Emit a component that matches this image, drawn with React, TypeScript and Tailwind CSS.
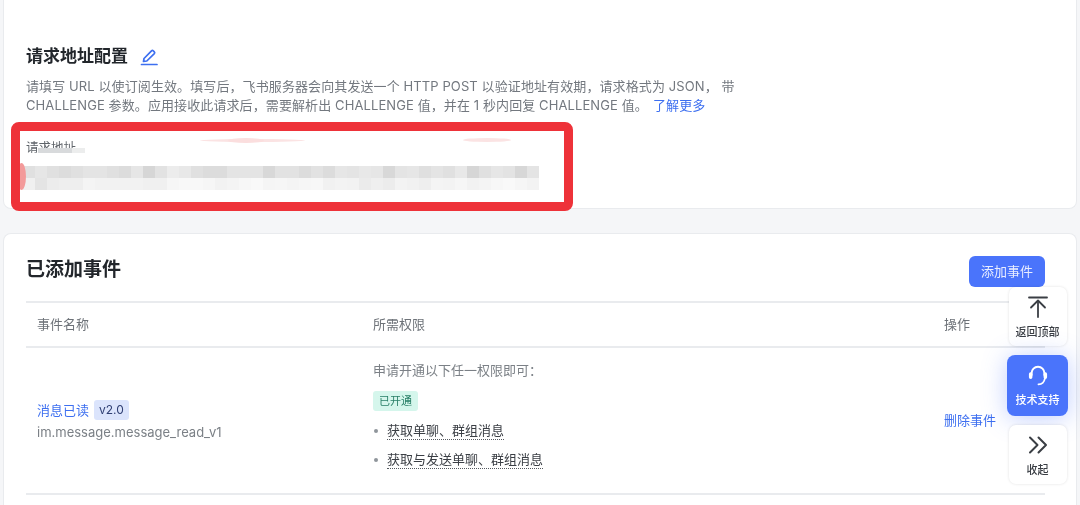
const FONT = "font-['Inter','Noto_Sans_CJK_SC',sans-serif]";

// pixelated address, one shade per mosaic block
const ROW_A = [
  "e0", "e6", "e0", "dc", "e0", "e4", "e4", "e0", "dc", "e6", "d6", "e2", "ec", "e8", "e0", "dc",
  "dc", "e4", "e4", "e4", "d8", "e2", "e2", "dc", "e2", "dc", "e6", "e4", "e8", "e6", "d8", "e4",
  "e6", "df", "e4", "e0", "e8", "d6", "e0", "e6", "e3", "d7", "e4",
];
const ROW_B = [
  "f0", "e4", "ec", "ee", "ee", "f4", "f2", "f2", "f2", "f2", "f0", "f0", "f6", "f8", "f8", "f6",
  "f2", "f4", "f7", "f9", "f5", "f6", "f4", "f6", "f7", "f1", "f3", "f2", "eb", "ef", "ec", "f3",
  "f1", "ee", "f4", "f3", "f6", "f2", "f4", "f7", "f9", "f6", "f3",
];

function PencilIcon() {
  return (
    <svg width="18" height="18" viewBox="0 0 18 18" fill="none" stroke="#3d6ff0" strokeWidth="1.7">
      <path d="M4 10.500 11.500 2.800a1.300 1.300 0 0 1 1.800 0l1 1a1.300 1.300 0 0 1 0 1.800L6.800 13l-3.300.5z" strokeLinejoin="round" />
      <path d="M1.500 16.500h15.500" strokeLinecap="round" />
    </svg>
  );
}

function BackToTopIcon() {
  return (
    <svg width="20" height="22" viewBox="0 0 20 22" fill="none" stroke="currentColor" strokeWidth="1.800" strokeLinecap="round" strokeLinejoin="round">
      <path d="M1 1.500h18" />
      <path d="M10 21V5" />
      <path d="M3 11.500l7-7 7 7" />
    </svg>
  );
}

function HeadsetIcon() {
  return (
    <svg width="22" height="22" viewBox="0 0 24 24" fill="none" stroke="white" strokeWidth="2.2" strokeLinecap="round">
      <path d="M5 12V10a7 7 0 0 1 14 0v2" />
      <path d="M4 11v3.500M20 11v3.500" strokeWidth="3.800" />
      <path d="M19.500 16c-.7 3.500-3 6-7 6.300" strokeWidth="1.900" />
    </svg>
  );
}

function CollapseIcon() {
  return (
    <svg width="20" height="18" viewBox="0 0 20 18" fill="none" stroke="currentColor" strokeWidth="2" strokeLinecap="round" strokeLinejoin="round">
      <path d="M2 1.500 9.500 9 2 16.500" />
      <path d="M10.500 1.500 18 9l-7.500 7.500" />
    </svg>
  );
}

function MosaicRow({ shades }: { shades: string[] }) {
  return (
    <div className="flex h-[12px]">
      {shades.map((s, i) => (
        <div key={i} className="w-[12px] shrink-0" style={{ backgroundColor: `#${s}${s}${s}` }} />
      ))}
    </div>
  );
}

function RequestCard() {
  return (
    <section className="relative mx-[3px] mb-[24px] h-[209px] rounded-b-[8px] border border-t-0 border-[#e9ebee] bg-white pl-[22px] pt-[46px]">
      <div className="flex items-center gap-[12px]">
        <h2 className="text-[17px] leading-[21px] font-semibold text-[#22262b]">请求地址配置</h2>
        <PencilIcon />
      </div>
      <p className="mt-[10px] w-[740px] text-[13px] leading-[19px] tracking-[0.1px] text-[#73787f]">
        请填写 URL 以使订阅生效。填写后，飞书服务器会向其发送一个 HTTP POST 以验证地址有效期，请求格式为 JSON， 带
        <br />
        CHALLENGE 参数。应用接收此请求后，需要解析出 CHALLENGE 值，并在 1 秒内回复 CHALLENGE 值。
        <span className="ml-[5px] text-[#3d6ff0]">了解更多</span>
      </p>
      <div className="relative mt-[24px] text-[12.500px] leading-[18px] text-[#5f646a]">
        请求地址
        <div className="absolute left-[12px] top-[9px] flex h-[5px]">
          <div className="w-[34px] bg-[#d8dadc]" />
          <div className="w-[13px] bg-[#eceded]" />
        </div>
      </div>
      <div className="ml-[-3px] mt-[9px] w-[516px]">
        <MosaicRow shades={ROW_A} />
        <MosaicRow shades={ROW_B} />
      </div>

      {/* annotation drawn over the screenshot */}
      <div className="absolute left-[7px] top-[122px] h-[89px] w-[562px] overflow-hidden rounded-[8px] border-[9px] border-[#ee3239]">
        <div className="absolute left-[180px] top-[8px] h-[3px] w-[105px] rounded-[50%] bg-[#fbe3e3]" />
        <div className="absolute left-[208px] top-[7px] h-[5px] w-[36px] rounded-[50%] bg-[#fbdede]" />
        <div className="absolute left-[443px] top-[7px] h-[4px] w-[48px] rounded-[50%] bg-[#fbe3e3]" />
        <div className="absolute left-[-3px] top-[32px] h-[27px] w-[9px] rounded-[50%] bg-[#f39a9a]" />
      </div>
    </section>
  );
}

function EventsCard() {
  return (
    <section className="mx-[3px] h-[300px] rounded-t-[8px] border border-b-0 border-[#e9ebee] bg-white pl-[22px] pr-[22px] pt-[22px]">
      <div className="flex h-[45px] items-start justify-between pr-[9px]">
        <h2 className="mt-[1px] text-[19px] leading-[26px] font-semibold text-[#22262b]">已添加事件</h2>
        <button className="h-[31px] w-[76px] rounded-[6px] bg-[#4a74fb] text-[13px] text-[#e8edff]">添加事件</button>
      </div>
      <div className="mr-[9px]">
        <div className="grid h-[47px] grid-cols-[336px_571px_1fr] items-center border-y-2 border-[#e9ebee] pl-[11px] text-[13px] text-[#6d7278]">
          <span>事件名称</span>
          <span>所需权限</span>
          <span>操作</span>
        </div>
        <div className="grid h-[147px] grid-cols-[336px_571px_1fr] items-center border-b-2 border-[#e9ebee] pl-[11px]">
          <div>
            <div className="flex items-center gap-[5px] text-[13px] leading-[20px]">
              <span className="text-[#3d6ff0]">消息已读</span>
              <span className="rounded-[3px] bg-[#dbe4fc] px-[5px] text-[12px] leading-[20px] text-[#2f3f73]">v2.0</span>
            </div>
            <p className="mt-[3px] text-[13px] leading-[18px] text-[#7b8086]">im.message.message_read_v1</p>
          </div>
          <div className="self-start pt-[13px] text-[13px]">
            <p className="leading-[18px] text-[#7b8086]">申请开通以下任一权限即可：</p>
            <span className="mt-[12px] block w-fit rounded-[3px] bg-[#d5f6ec] px-[6px] text-[11px] leading-[20px] text-[#2a8068]">
              已开通
            </span>
            <ul className="mt-[10px] flex flex-col gap-[10px] text-[#3a3e44]">
              {["获取单聊、群组消息", "获取与发送单聊、群组消息"].map((label) => (
                <li key={label} className="flex items-center gap-[9px] pl-[1px] leading-[18px]">
                  <span className="h-[4px] w-[4px] rounded-full bg-[#8f959b]" />
                  <span className="border-b border-dotted border-[#55595f]">{label}</span>
                </li>
              ))}
            </ul>
          </div>
          <button className="mt-[1px] w-fit text-[13px] text-[#3d6ff0]">删除事件</button>
        </div>
      </div>
    </section>
  );
}

function FloatingActions() {
  return (
    <div className="absolute right-[12px] top-[287px] flex w-[61px] flex-col items-center gap-[9px] text-[#3a3e44]">
      <button className="flex h-[59px] w-[58px] flex-col items-center rounded-[7px] bg-white pt-[9px] shadow-[0_0_3px_rgba(0,0,0,0.12)]">
        <BackToTopIcon />
        <span className="mt-[6px] text-[11px] leading-[16px] font-medium">返回顶部</span>
      </button>
      <button className="flex h-[61px] w-[61px] flex-col items-center rounded-[8px] bg-[#4a74fb] pt-[9px] text-white shadow-[0_2px_24px_rgba(74,116,251,0.35)]">
        <HeadsetIcon />
        <span className="mt-[6px] text-[11px] leading-[16px] font-medium">技术支持</span>
      </button>
      <button className="flex h-[59px] w-[58px] flex-col items-center rounded-[7px] bg-white pt-[11px] shadow-[0_0_3px_rgba(0,0,0,0.12)]">
        <CollapseIcon />
        <span className="mt-[8px] text-[11px] leading-[16px] font-medium">收起</span>
      </button>
    </div>
  );
}

export default function App() {
  return (
    <div className={`relative h-[505px] w-[1080px] overflow-hidden bg-[#f5f6f8] blur-[0.4px] ${FONT}`}>
      <RequestCard />
      <EventsCard />
      <FloatingActions />
    </div>
  );
}
